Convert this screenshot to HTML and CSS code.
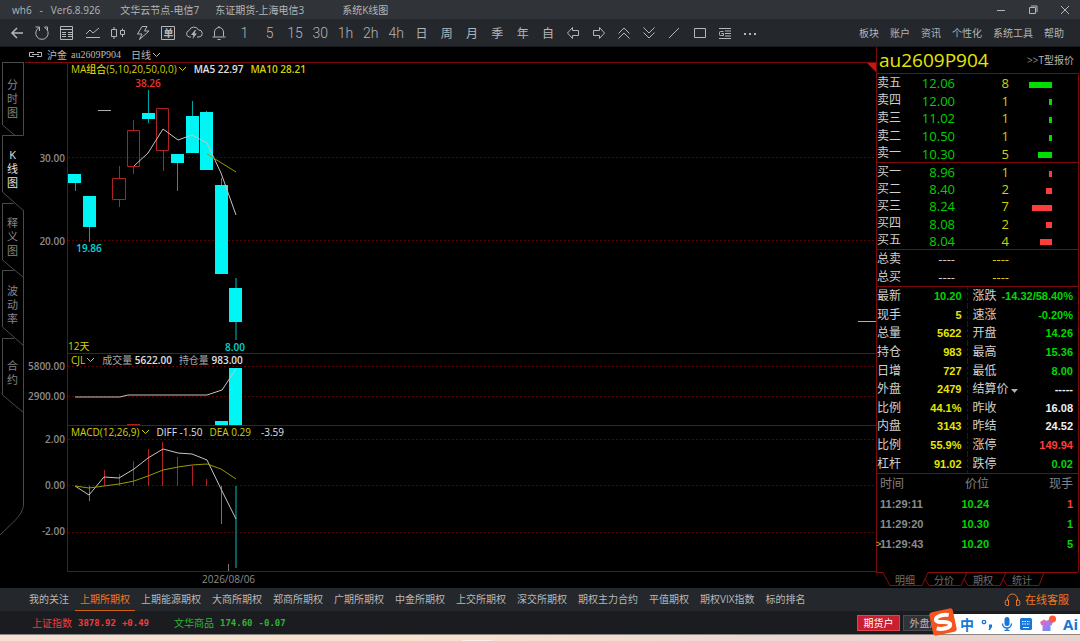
FILE: index.html
```html
<!DOCTYPE html>
<html lang="zh-CN">
<head>
<meta charset="utf-8">
<title>wh6 - 系统K线图</title>
<link rel="stylesheet" href="styles.css">
</head>
<body>
<header class="titlebar">
  <span class="app">wh6</span><span class="dash">-</span><span class="ver">Ver6.8.926</span>
  <span class="node">文华云节点-电信7</span><span class="broker">东证期货-上海电信3</span><span class="view">系统K线图</span>
  <div class="window-controls">
    <button type="button" aria-label="最小化"><svg width="10" height="10"><path d="M1 5.500h8"/></svg></button>
    <button type="button" aria-label="还原"><svg width="10" height="10"><path d="M1.500 2.500h6v6h-6zM3 1h6v6"/></svg></button>
    <button type="button" aria-label="关闭"><svg width="10" height="10"><path d="M1 1l8 8M9 1l-8 8"/></svg></button>
  </div>
</header>

<div class="toolbar">
  <div class="tools">
    <button type="button" aria-label="返回"><svg width="16" height="16"><path d="M14 8H3M8 3L3 8l5 5" stroke-width="1.500"/></svg></button>
    <button type="button" aria-label="刷新"><svg width="16" height="16"><path d="M5.200 2.600A6.200 6.200 0 1 0 10.500 2.500M1.500 2h4v4M13.500 5V2h-3"/></svg></button>
    <button type="button" aria-label="报价表"><svg width="16" height="16"><path d="M1.500 1.500h12v13h-12zM1.500 4.500h12M3 7.500h4M9 7.500h4M3 9.500h4M9 9.500h4M3 11.500h4M9 11.500h4"/></svg></button>
    <button type="button" aria-label="分时图"><svg width="16" height="16"><path d="M1 9l4-4 3 3 6-5M1 12.500h14"/></svg></button>
    <button type="button" aria-label="K线图"><svg width="16" height="16"><path d="M1.500 4.500h5v7h-5zM4 2v2.500M4 11.500V14M10.500 5.500h4v4h-4zM12.500 3.500v2M12.500 9.500V12"/></svg></button>
    <button type="button" aria-label="闪电下单"><svg width="16" height="16"><path d="M7 1.500h5L9.500 6H14L4.500 14.500 7 9H2.500z"/></svg></button>
    <button type="button" aria-label="下单"><svg width="16" height="16"><path d="M1.500 1.500h13v13h-13z"/></svg><span class="boxed">单</span></button>
    <button type="button" aria-label="云条件单"><svg width="18" height="16"><path d="M6 12H4.500a3.300 3.300 0 0 1-.3-6.500A5 5 0 0 1 13.500 5a3.500 3.500 0 0 1 .5 7h-2"/><path class="solid" d="M10 5L6 10h2.500L7.500 14 12 8.500H9.500L11 5z"/></svg></button>
    <button type="button" aria-label="预警"><svg width="16" height="16"><path d="M3.500 11.500V7a4.500 4.500 0 0 1 9 0v4.500M1.500 12h13M6.500 14.500h3M8 1v1.500"/></svg></button>
    <button type="button">1</button><button type="button">5</button><button type="button">15</button><button type="button">30</button>
    <button type="button">1h</button><button type="button">2h</button><button type="button">4h</button>
    <button type="button" class="cn">日</button><button type="button" class="cn">周</button><button type="button" class="cn">月</button>
    <button type="button" class="cn">季</button><button type="button" class="cn">年</button><button type="button" class="cn">自</button>
    <button type="button" aria-label="向左"><svg width="14" height="14"><path d="M6.500 1.500L1.500 7l5 5.500V9.500h6v-5h-6z"/></svg></button>
    <button type="button" aria-label="向右"><svg width="14" height="14"><path d="M7.500 1.500l5 5.500-5 5.500V9.500h-6v-5h6z"/></svg></button>
    <button type="button" aria-label="放大"><svg width="14" height="14"><path d="M1.500 7.500L7 2l5.500 5.500M1.500 12.500L7 7l5.500 5.500"/></svg></button>
    <button type="button" aria-label="缩小"><svg width="14" height="14"><path d="M1.500 1.500L7 7l5.500-5.500M1.500 6.500L7 12l5.500-5.500"/></svg></button>
    <button type="button" aria-label="画线"><svg width="14" height="14"><path d="M2 12l10-10"/></svg></button>
    <button type="button" aria-label="矩形"><svg width="14" height="14"><path d="M1.500 2.500h11v9h-11z"/></svg></button>
    <button type="button" aria-label="资料"><svg width="14" height="14"><path d="M1 2.500h12M7 5h6M7 7.500h6M7 10h6M1 12.500h12M5.500 5.500h-3a1 1 0 0 0-1 1v2a1 1 0 0 0 1 1h3v-2h-2"/></svg></button>
    <button type="button" aria-label="更多"><svg width="16" height="14"><path class="solid" d="M2 7h2v2H2zM7 7h2v2H7zM12 7h2v2h-2z"/></svg></button>
  </div>
  <nav class="menu">
    <button type="button">板块</button><button type="button">账户</button><button type="button">资讯</button><button type="button">个性化</button><button type="button">系统工具</button><button type="button">帮助</button>
  </nav>
</div>

<main class="workspace">
  <section class="charts">
    <div class="symbol">
      <svg width="15" height="8"><path d="M6 1.500H1.500v4H6M9 1.500h4.500v4H9M4 3.500h7"/></svg>
      <span>沪金</span><span class="code">au2609P904</span>
      <button type="button" class="period">日线<svg width="9" height="6"><path d="M1 1l3.500 3.500L8 1"/></svg></button>
    </div>
    <div class="chart-body">
      <nav class="side-tabs">
        <svg class="outline" width="26" height="476">
          <path d="M24 .5H2.500V63L15 73.500M23.500 0v73.500H2.500V130L24 149M14 141.500H2.500V198L24 216M14 208.500H2.500V265L24 284M14 276.500H2.500V333L24 351M23.500 149v293c0 6-4 12-10 18L0 473"/>
        </svg>
        <button type="button" class="side-tab tall">分时图</button>
        <button type="button" class="side-tab active">K线图</button>
        <button type="button" class="side-tab">释义图</button>
        <button type="button" class="side-tab">波动率</button>
        <button type="button" class="side-tab">合约</button>
      </nav>
      <div class="panes">
        <div class="pane pane-price">
          <svg class="axis"><text x="40" y="99">30.00</text><text x="40" y="182">20.00</text></svg>
          <div class="plot">
            <svg class="canvas">
              <g class="grid"><line x1="0" x2="100%" y1="94.500" y2="94.500"/><line x1="0" x2="100%" y1="177.500" y2="177.500"/></g>
              <g class="wick-down"><path d="M7.500 120v8M21.500 164v15M80.500 27v33M109.500 100v28M124.500 38v16M138.500 48v3M153.500 115v8"/><path class="dim" d="M168 215v62"/></g>
              <g class="up"><path d="M51.500 103v12M51.500 136v8M65.500 57v10M65.500 104v7M95.500 87v21M44.500 115.500h13v21h-13zM59.500 67.500h12v36h-12zM88.500 45.500h12v42h-12z"/></g>
              <g class="down"><path d="M0 111h13v9H0zM15 133h13v31H15zM74 50h13v6H74zM103 91h13v9h-13zM118 53h13v37h-13zM132 49h13v58h-13zM147 122h13v89h-13zM161 225h13v34h-13z"/></g>
              <path class="flat" d="M30 47.500h13"/>
              <polyline class="white-line" points="66,103 80,90 95,66 110,77 124,72 139,80 153,110 168,152"/>
              <polyline class="yellow-line" points="139,91 168,109"/>
              <g class="tags"><text class="t-red" x="80" y="24">38.26</text><text class="t-cyan" x="21" y="189">19.86</text><text class="t-cyan" x="167" y="288">8.00</text></g>
            </svg>
            <svg class="edge" width="18" height="290"><path class="corner" d="M9 0h9v9z"/><path class="flat" d="M0 258.500h18"/></svg>
            <div class="legend"><button type="button" class="yel">MA组合(5,10,20,50,0,0)<svg width="9" height="6"><path d="M1 1l3.500 3.500L8 1"/></svg></button><span class="wht">MA5 22.97</span><span class="yel">MA10 28.21</span></div>
            <div class="days">12天</div>
          </div>
        </div>
        <div class="pane pane-volume">
          <svg class="axis"><text x="40" y="17">5800.00</text><text x="40" y="47">2900.00</text></svg>
          <div class="plot">
            <svg class="canvas">
              <g class="grid"><line x1="0" x2="100%" y1="12.500" y2="12.500"/><line x1="0" x2="100%" y1="42.500" y2="42.500"/></g>
              <g class="down"><path d="M147 67h13v5h-13zM161 14h13v58h-13z"/></g>
              <path class="up" d="M59 70.500h13"/>
              <polyline class="white-line" points="7,43 52,43 60,41 128,41 139,41 154,36 168,15"/>
            </svg>
            <div class="legend"><button type="button" class="yel">CJL<svg width="9" height="6"><path d="M1 1l3.500 3.500L8 1"/></svg></button><span class="wht"><span class="dimtext">成交量</span> 5622.00</span><span class="wht"><span class="dimtext">持仓量</span> 983.00</span></div>
          </div>
        </div>
        <div class="pane pane-macd">
          <svg class="axis"><text x="40" y="18">2.00</text><text x="40" y="64">0.00</text><text x="40" y="110">-2.00</text></svg>
          <div class="plot">
            <svg class="canvas">
              <g class="grid"><line x1="0" x2="100%" y1="13.500" y2="13.500"/><line x1="0" x2="100%" y1="59.500" y2="59.500"/><line x1="0" x2="100%" y1="106.500" y2="106.500"/></g>
              <path class="up" d="M36.500 44v16M51.500 48v12M65.500 35v25M80.500 23v37M94.500 16v44M109.500 31v29M124.500 40v20M138.500 53v7"/>
              <g class="wick-down"><path d="M21.500 60v15M153.500 60v38"/><path class="dim" d="M168 60v82"/></g>
              <polyline class="white-line" points="7,60 21,69 36,51 51,52 66,43 80,32 95,23 110,27 124,28 139,34 153,63 168,93"/>
              <polyline class="yellow-line" points="7,60 21,62 36,60 51,58 66,55 80,50 95,44 110,41 124,39 139,38 153,43 168,53"/>
              <path class="tick" d="M160.500 138v8"/>
            </svg>
            <div class="legend"><button type="button" class="yel">MACD(12,26,9)<svg width="9" height="6"><path d="M1 1l3.500 3.500L8 1"/></svg></button><span class="wht">DIFF -1.50</span><span class="yel">DEA 0.29</span><span class="wht last">-3.59</span></div>
          </div>
        </div>
        <div class="date-axis">2026/08/06</div>
      </div>
    </div>
  </section>

  <aside class="quote">
    <div class="quote-head"><h1>au2609P904</h1><button type="button"><span class="more">&gt;&gt;</span>T型报价</button></div>
    <div class="quote-box">
      <table class="book sell">
        <tr><th scope="row">卖五</th><td class="price">12.06</td><td class="qty">8</td><td><i style="width:23px"></i></td></tr>
        <tr><th scope="row">卖四</th><td class="price">12.00</td><td class="qty">1</td><td><i style="width:3px"></i></td></tr>
        <tr><th scope="row">卖三</th><td class="price">11.02</td><td class="qty">1</td><td><i style="width:3px"></i></td></tr>
        <tr><th scope="row">卖二</th><td class="price">10.50</td><td class="qty">1</td><td><i style="width:3px"></i></td></tr>
        <tr><th scope="row">卖一</th><td class="price">10.30</td><td class="qty">5</td><td><i style="width:14px"></i></td></tr>
      </table>
      <table class="book buy">
        <tr><th scope="row">买一</th><td class="price">8.96</td><td class="qty">1</td><td><i style="width:3px"></i></td></tr>
        <tr><th scope="row">买二</th><td class="price">8.40</td><td class="qty">2</td><td><i style="width:6px"></i></td></tr>
        <tr><th scope="row">买三</th><td class="price">8.24</td><td class="qty">7</td><td><i style="width:20px"></i></td></tr>
        <tr><th scope="row">买四</th><td class="price">8.08</td><td class="qty">2</td><td><i style="width:6px"></i></td></tr>
        <tr><th scope="row">买五</th><td class="price">8.04</td><td class="qty">4</td><td><i style="width:12px"></i></td></tr>
      </table>
      <table class="book total">
        <tr><th scope="row">总卖</th><td class="price">----</td><td class="qty">----</td><td></td></tr>
        <tr><th scope="row">总买</th><td class="price">----</td><td class="qty">----</td><td></td></tr>
      </table>
      <table class="stats">
        <tr><th scope="row">最新</th><td class="g">10.20</td><th scope="row">涨跌</th><td class="g">-14.32/58.40%</td></tr>
        <tr><th scope="row">现手</th><td>5</td><th scope="row">速涨</th><td class="g">-0.20%</td></tr>
        <tr><th scope="row">总量</th><td>5622</td><th scope="row">开盘</th><td class="g">14.26</td></tr>
        <tr><th scope="row">持仓</th><td>983</td><th scope="row">最高</th><td class="g">15.36</td></tr>
        <tr><th scope="row">日增</th><td>727</td><th scope="row">最低</th><td class="g">8.00</td></tr>
        <tr><th scope="row">外盘</th><td>2479</td><th scope="row">结算价<svg width="7" height="4"><path d="M0 0h7L3.500 4z"/></svg></th><td class="w">-----</td></tr>
        <tr><th scope="row">比例</th><td>44.1%</td><th scope="row">昨收</th><td class="w">16.08</td></tr>
        <tr><th scope="row">内盘</th><td>3143</td><th scope="row">昨结</th><td class="w">24.52</td></tr>
        <tr><th scope="row">比例</th><td>55.9%</td><th scope="row">涨停</th><td class="r">149.94</td></tr>
        <tr><th scope="row">杠杆</th><td>91.02</td><th scope="row">跌停</th><td class="g">0.02</td></tr>
      </table>
      <table class="trades">
        <tr><th scope="col">时间</th><th scope="col">价位</th><th scope="col">现手</th></tr>
        <tr><td>11:29:11</td><td class="g">10.24</td><td class="r">1</td></tr>
        <tr><td>11:29:20</td><td class="g">10.30</td><td class="g">1</td></tr>
        <tr class="current"><td>11:29:43</td><td class="g">10.20</td><td class="g">5</td></tr>
      </table>
    </div>
    <nav class="quote-tabs">
      <svg class="outline" width="204" height="16"><path d="M0 .5h7L14 13.500h32L52 .5h150M49 7l4 6.500h32L91 .5M88 7l4 6.500h32L130 .5M127 7l4 6.500h32L168 .5"/></svg>
      <button type="button">明细</button><button type="button">分价</button><button type="button">期权</button><button type="button">统计</button>
    </nav>
  </aside>
</main>

<div class="boards">
  <nav>
    <button type="button">我的关注</button><button type="button" class="active">上期所期权</button><button type="button">上期能源期权</button><button type="button">大商所期权</button><button type="button">郑商所期权</button><button type="button">广期所期权</button><button type="button">中金所期权</button><button type="button">上交所期权</button><button type="button">深交所期权</button><button type="button">期权主力合约</button><button type="button">平值期权</button><button type="button">期权VIX指数</button><button type="button">标的排名</button>
  </nav>
  <button type="button" class="service"><svg width="17" height="15"><path d="M3.500 8.500V7a5 5 0 0 1 10 0v1.500M4.500 8v5.500H3a1.800 1.800 0 0 1-1.800-1.800V9.800A1.800 1.800 0 0 1 3 8zM12.500 8v5.500H14a1.800 1.800 0 0 0 1.800-1.800V9.800A1.800 1.800 0 0 0 14 8z"/></svg>在线客服</button>
</div>

<footer class="status">
  <div class="index rise"><span>上证指数</span><span class="num">3878.92</span><span class="num">+0.49</span></div>
  <div class="index fall"><span>文华商品</span><span class="num">174.60</span><span class="num">-0.07</span></div>
  <div class="accounts"><button type="button" class="futures">期货户</button><button type="button" class="foreign">外盘户</button></div>
  <div class="ime">
    <svg class="ime-logo" width="28" height="28"><g transform="rotate(-12 14 14)"><rect x="2" y="2" width="24" height="24" rx="3"/><path d="M21 8.500C17 6.500 8 6.500 7.500 10.500S20.500 13.500 20.500 17.500 11 21.500 6.500 19"/></g></svg>
    <button type="button" class="ime-zh">中</button>
    <button type="button" aria-label="标点"><svg width="14" height="14"><circle cx="4" cy="5" r="1.700" fill="none" stroke="#1677d9" stroke-width="1.300"/><path d="M9 7.500h3V10l-2 3H8.500l1-2.500H9z"/></svg></button>
    <button type="button" aria-label="语音"><svg width="14" height="14"><rect x="4.500" y="0" width="5" height="9" rx="2.500"/><path d="M2.500 6.500a4.500 4.500 0 0 0 9 0M7 11v3M4.500 13.500h5" fill="none" stroke="#1677d9" stroke-width="1.400"/></svg></button>
    <button type="button" aria-label="键盘"><svg width="14" height="14"><rect x="1" y="1" width="12" height="12" rx="1.500"/><path d="M3 4.500h8M3 7h8" stroke="#fff" stroke-dasharray="1.500 1"/><path d="M4 10.500h6" stroke="#fff"/></svg></button>
    <button type="button" aria-label="皮肤"><svg width="18" height="18"><defs><linearGradient id="skin" x1="0" y1="0" x2="1" y2="1"><stop offset="0" stop-color="#ff6a7a"/><stop offset=".5" stop-color="#a878f0"/><stop offset="1" stop-color="#4a9cf5"/></linearGradient></defs><path fill="url(#skin)" d="M5 4.500c1.500 1.500 3.500 1.500 5 0L14 7l-1.500 3.500L11.500 10v6h-8v-6l-1 .5L1 7z"/><circle cx="13.500" cy="4" r="3.500" fill="#ff5a32"/></svg></button>
    <button type="button" class="ime-ai">Ai</button>
  </div>
</footer>
<div class="desktop"><span></span></div>
</body>
</html>
```
FILE: styles.css
```css
* { box-sizing: border-box; }
body {
  margin: 0;
  min-height: 100vh;
  display: flex;
  flex-direction: column;
  background: #000;
  color: #b8b8b8;
  font: 10px/14px "Open Sans", "Noto Sans CJK SC", sans-serif;
  overflow: hidden;
}
button {
  margin: 0;
  padding: 0;
  border: 0;
  background: none;
  color: inherit;
  font: inherit;
  white-space: nowrap;
}
svg { display: block; fill: none; stroke: currentColor; }
svg text { stroke: none; fill: currentColor; }
.solid { fill: currentColor; stroke: none; }

/* title bar */
.titlebar {
  display: flex;
  align-items: center;
  height: 19px;
  padding-left: 12px;
  background: #303338;
  color: #b4b6b8;
}
.dash { margin: 0 8px; }
.node { margin-left: 20px; }
.broker { margin-left: 16px; }
.view { margin-left: 38px; }
.window-controls {
  display: flex;
  gap: 22px;
  margin-left: auto;
  padding-right: 10px;
}

/* toolbar */
.toolbar {
  display: flex;
  align-items: center;
  justify-content: space-between;
  height: 28px;
  padding: 0 16px 0 4px;
  background: #24272b;
  border-bottom: 1px solid #17191c;
  color: #b4b6b8;
}
.tools {
  display: grid;
  grid-template-columns: repeat(30, 1fr);
  flex: 0 1 759px;
}
.tools button {
  display: grid;
  place-items: center;
  height: 26px;
  font: 300 14px/18px Roboto, sans-serif;
}
.tools button > * { grid-area: 1 / 1; }
.tools .cn { font: 12px/18px "Noto Sans CJK SC", sans-serif; }
.boxed { font: 700 10px/14px "Noto Sans CJK SC", sans-serif; }
.menu { display: flex; gap: 11px; }

/* charts */
.workspace { flex: 1; display: flex; }
.charts { flex: 1; min-width: 0; display: flex; flex-direction: column; }
.symbol {
  display: flex;
  align-items: center;
  gap: 4px;
  height: 15px;
  padding-left: 28px;
}
.code { font: 10px/14px "Liberation Serif", serif; }
.period { display: flex; align-items: center; gap: 1px; margin-left: 6px; }
.chart-body { flex: 1; display: flex; }
.side-tabs {
  position: relative;
  display: flex;
  flex-direction: column;
  width: 25px;
  color: #858585;
}
.outline { position: absolute; left: 0; top: 0; pointer-events: none; }
.side-tabs .outline { color: #4a4a4a; }
.side-tab {
  height: 68px;
  padding: 0 7px;
  font-size: 11px;
  line-height: 14px;
  white-space: normal;
  word-break: break-all;
}
.side-tab.tall { height: 73px; }
.side-tab.active { color: #e6e6e6; }
.panes {
  flex: 1;
  display: grid;
  grid-template-rows: 291px 72px 147px auto;
  align-content: start;
}
.pane {
  display: grid;
  grid-template-columns: 42px 1fr;
  grid-template-rows: 100%;
}
.axis {
  width: 42px;
  height: 100%;
  color: #8c8c8c;
  font-weight: 600;
  text-anchor: end;
}
.plot {
  display: grid;
  grid-template-rows: 100%;
  border-left: 1px solid #7d0a0a;
  border-top: 1px solid #7d0a0a;
}
.pane-price { border-top: 1px solid #7d0a0a; }
.pane-price .plot { border-top: 0; }
.pane-macd .plot { border-bottom: 1px solid #7d0a0a; }
.plot > * { grid-area: 1 / 1; }
.canvas { width: 100%; height: 100%; }
.edge { justify-self: end; }
.grid { stroke: #5c0000; stroke-dasharray: 2 2; }
.down { fill: #00f5f5; stroke: none; }
.wick-down { stroke: #00a3a3; }
.wick-down .dim { stroke: #006060; stroke-width: 2; }
.up { stroke: #b02222; }
.flat { stroke: #b0b0b0; }
.white-line { stroke: #c4c4c4; }
.yellow-line { stroke: #9a9a00; }
.corner { fill: #c81414; stroke: none; }
.tick { stroke: #777; }
.tags { text-anchor: middle; font-weight: 600; }
.t-red { fill: #f03232; }
.t-cyan { fill: #00d8d8; }
.legend {
  align-self: start;
  display: flex;
  gap: 7px;
  padding-left: 3px;
  font-weight: 600;
  line-height: 12px;
}
.legend button { display: flex; align-items: center; gap: 1px; font-weight: 500; }
.yel { color: #d2d200; }
.wht { color: #e0e0e0; }
.dimtext { color: #a8a8a8; font-weight: 400; }
.legend .last { margin-left: 3px; }
.pane-macd .legend { font-weight: 500; }
.days { align-self: end; color: #d2d200; }
.date-axis { padding-left: 177px; color: #8c8c8c; }

/* quote panel */
.quote {
  flex: 0 0 204px;
  display: flex;
  flex-direction: column;
}
.quote-head {
  display: flex;
  align-items: center;
  justify-content: space-between;
  height: 26px;
  padding: 0 6px 0 2px;
  border-left: 1px solid #7d0a0a;
}
h1 {
  margin: 0;
  color: #e6e600;
  font: 400 19px/24px "Open Sans", sans-serif;
}
.more { color: #8a8a8a; }
.quote-box {
  flex: 1;
  margin-right: 1px;
  border: solid #7d0a0a;
  border-width: 1px 1px 0 1px;
}
table { width: 100%; border-collapse: collapse; table-layout: fixed; }
th, td { padding: 0; text-align: left; font-weight: 400; }
th { color: #d0d0d0; font-size: 12px; line-height: 16px; }
.book { height: 89px; border-bottom: 1px solid #7d0a0a; }
.book.buy { height: 87px; }
.book.total { height: 37px; }
.book th { width: 37px; }
.book td { padding-top: 1px; text-align: right; font-size: 13px; line-height: 16px; }
.book .price { width: 41px; color: #00d200; }
.book .qty { width: 54px; color: #d2d200; }
.book td:last-child { padding: 4px 26px 0 0; }
.book i { display: block; height: 6px; margin-left: auto; background: #00e000; }
.buy i { background: #ff3c3c; }
.total .price { color: #d0d0d0; }
.stats { height: 187px; border-bottom: 1px solid #7d0a0a; }
.stats td {
  color: #e6e600;
  font: 700 11px/16px "Liberation Sans", sans-serif;
  text-align: right;
  white-space: nowrap;
}
.stats th:first-child { width: 30px; }
.stats td:nth-child(2) { width: 60px; padding-right: 5px; border-right: 1px dashed #5c0000; }
.stats th:nth-child(3) { width: 26px; padding-left: 5px; white-space: nowrap; }
.stats td:last-child { padding-right: 5px; }
.stats svg { display: inline-block; margin-left: 2px; fill: #b0b0b0; stroke: none; }
.trades th { color: #828282; line-height: 20px; }
.trades td { font: 700 11px/20px "Liberation Sans", sans-serif; color: #8c8c8c; }
.trades th:first-child, .trades td:first-child { width: 60px; padding-left: 3px; }
.trades th:nth-child(2), .trades td:nth-child(2) { width: 52px; text-align: right; }
.trades th:last-child, .trades td:last-child { padding-right: 5px; text-align: right; }
.quote-box .g { color: #00d800; }
.quote-box .r { color: #ff3c3c; }
.quote-box .w { color: #f0f0f0; }
.current td:first-child { position: relative; }
.current td:first-child::before {
  content: ">";
  position: absolute;
  left: -1px;
  color: #d2d200;
  font: 400 9px/20px "Liberation Sans", sans-serif;
}
.quote-tabs {
  position: relative;
  display: flex;
  gap: 19px;
  height: 16px;
  padding-left: 19px;
  color: #707070;
  line-height: 12px;
}
.quote-tabs .outline { color: #8c0c0c; }

/* board tabs */
.boards {
  display: flex;
  justify-content: space-between;
  height: 23px;
  padding: 0 11px 0 24px;
  background: #24272b;
}
.boards nav { display: flex; gap: 1px; }
.boards nav button { padding: 0 5px; border-bottom: 1px solid transparent; }
.boards nav .active { color: #f07820; border-color: #d06010; }
.service {
  display: flex;
  align-items: center;
  gap: 4px;
  color: #f07820;
  font-size: 11px;
}

/* status bar */
.status {
  position: relative;
  display: flex;
  align-items: center;
  height: 23px;
  padding-left: 32px;
  background: #1a1c20;
}
.index { display: flex; gap: 6px; margin-right: 25px; }
.num { font: 700 9px/14px "DejaVu Sans Mono", monospace; }
.rise { color: #f03c3c; }
.fall { color: #32b432; }
.accounts { display: flex; gap: 3px; margin-left: auto; padding-right: 134px; }
.accounts button { width: 43px; height: 16px; line-height: 14px; }
.futures { background: #c8202e; border: 1px solid #e04450; color: #fff; }
.foreign { background: #303338; border: 1px solid #4a4d52; }
.ime {
  position: absolute;
  right: 0;
  top: 3px;
  display: flex;
  align-items: center;
  justify-content: space-between;
  width: 144px;
  height: 20px;
  padding: 0 2px 0 24px;
  background: #fff;
  color: #1677d9;
}
.ime svg { fill: #1677d9; stroke: none; }
.ime .ime-logo {
  position: absolute;
  left: -7px;
  top: -6px;
  fill: #f4541e;
}
.ime-logo path { fill: none; stroke: #fff; stroke-width: 4; }
.ime-zh { font: 700 14px/18px "Noto Sans CJK SC", sans-serif; }
.ime-ai { font: 700 15px/18px "Open Sans", sans-serif; }

.desktop {
  height: 7px;
  padding: 5px 0 0 462px;
  border-top: 1px solid #8a8786;
  background: linear-gradient(90deg, #f6e0d4, #f8e2cc 38%, #ecd8d2 70%, #e8d4cc);
}
.desktop span {
  display: block;
  width: 30px;
  height: 1px;
  background: #faf0e8;
}
```
